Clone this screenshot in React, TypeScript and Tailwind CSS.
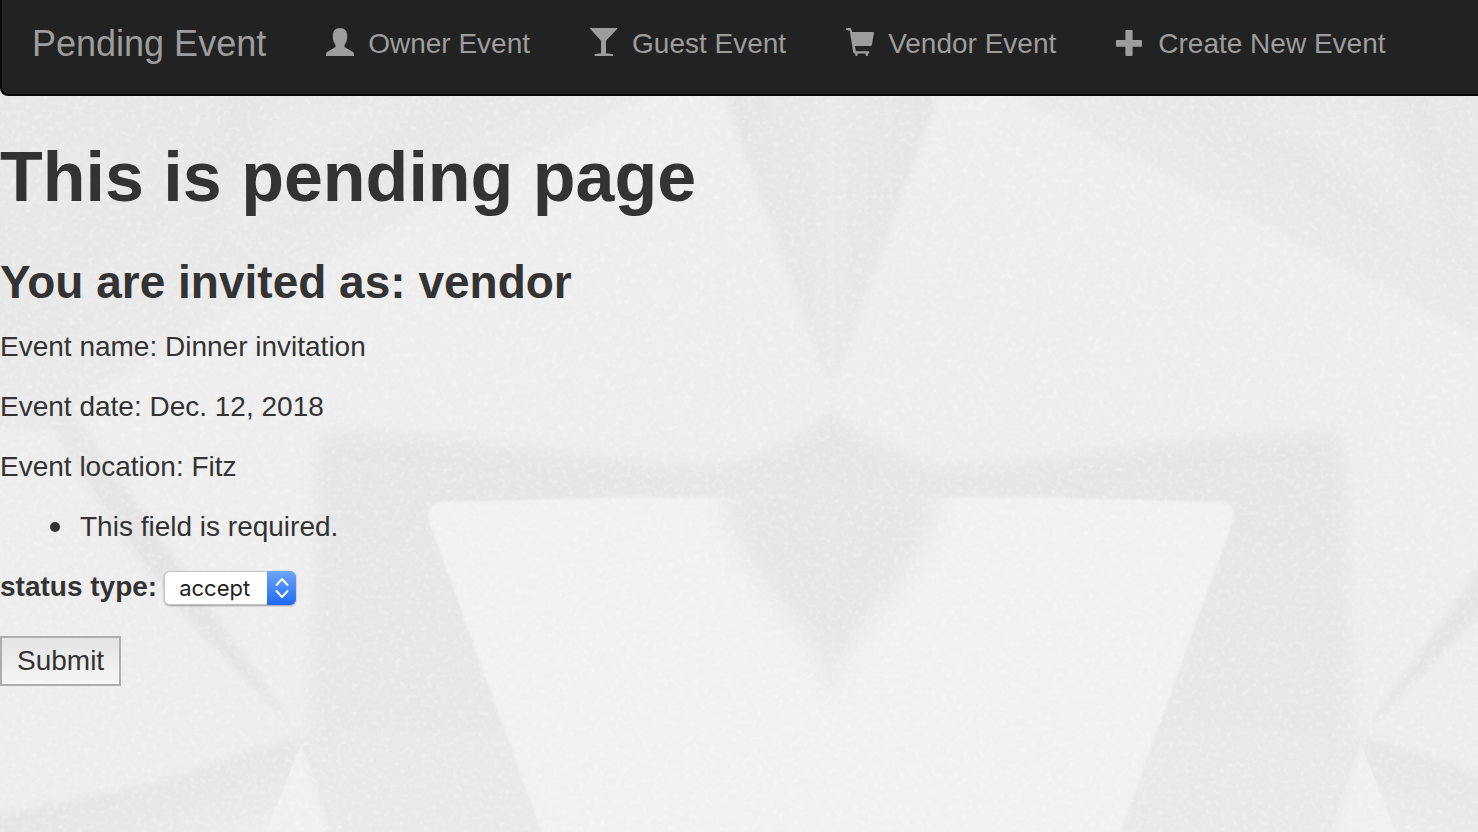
import React from 'react';

function UserIcon() {
  return (
    <svg viewBox="0 0 28 28" className="mb-1 size-7 fill-current" aria-hidden="true">
      <path d="M14 0c4.6 0 7.200 3 7.200 7.400 0 3-.4 5.200-1.200 7-.5 1.200-1.500 2-1.500 3v.8c0 .8.400 1.300 1.100 1.600l7 3.900c.9.5 1.400 1.100 1.400 2.100V28H0v-2.200c0-1 .5-1.600 1.400-2.100l7-3.900c.7-.3 1.100-.8 1.100-1.600v-.8c0-1-1-1.800-1.500-3-.8-1.800-1.200-4-1.200-7C6.800 3 9.400 0 14 0z" />
    </svg>
  );
}

function GlassIcon() {
  return (
    <svg viewBox="0 0 28 28" className="mb-1 size-7 fill-current" aria-hidden="true">
      <path d="M.6 0h26.300c.6 0 .6.500.2 1L16 12.800V25.300l6.200.8c.5.100.8.300.8.700v1.200H4.600v-1.200c0-.4.300-.6.800-.7l5.600-.8V12.800L.3 1C-.1.500 0 0 .6 0z" />
    </svg>
  );
}

function CartIcon() {
  return (
    <svg viewBox="0 0 28 28" className="mb-1 size-7 fill-current" aria-hidden="true">
      <path d="M.9 0h3.200c.6 0 1 .3 1.200.9L6.100 4h20.700c.8 0 1.200.5 1.100 1.200l-2 11.600c-.2.900-.7 1.300-1.500 1.300H9l.7 4.400c.1.500.4.800.9.800h11.800c1.200 0 1.200 2.200 0 2.200H22v1.300c0 1.600-2.400 1.600-2.400 0v-1.300h-8v1.300c0 1.600-2.400 1.600-2.400 0v-1.300h-.4c-.9 0-1.400-.4-1.600-1.300L3.700 2.700.6 2C-.4 1.500-.1 0 .9 0z" />
    </svg>
  );
}

function PlusIcon() {
  return (
    <svg viewBox="0 0 28 28" className="mb-1 size-7 fill-current" aria-hidden="true">
      <path d="M10.400 2h5.200c.6 0 1 .4 1 1v9h8.400c.6 0 1 .4 1 1v4.700c0 .6-.4 1-1 1h-8.400V27c0 .6-.4 1-1 1h-5.200c-.6 0-1-.4-1-1v-8.300H1c-.6 0-1-.4-1-1V13c0-.6.4-1 1-1h8.400V3c0-.6.400-1 1-1z" />
    </svg>
  );
}

const links = [
  { label: 'Owner Event', Icon: UserIcon },
  { label: 'Guest Event', Icon: GlassIcon },
  { label: 'Vendor Event', Icon: CartIcon },
  { label: 'Create New Event', Icon: PlusIcon },
];

/* Left half of the folded-paper pattern; the right half mirrors it. */
function Folds() {
  return (
    <g>
      <path d="M-200 0H770L640 100L190 335L60 420L-200 560Z" fill="url(#corner)" filter="url(#soft2)" />
      <path d="M0 96H230L190 260L90 310L0 300Z" fill="#eeeeee" opacity=".35" filter="url(#soft8)" />
      <path d="M270 96L215 250L330 160L440 96Z" fill="#efefef" opacity=".5" filter="url(#soft8)" />
      <path d="M20 380L65 400L100 450L190 580L302 738L190 622L110 530Z" fill="url(#crease)" filter="url(#soft2)" />
      <path d="M-40 420L55 435L190 625L298 738L-40 845Z" fill="#ededed" opacity=".6" />
      <path d="M298 737L150 785L-80 830V960H250L300 770Z" fill="url(#lower)" filter="url(#soft2)" />
      <path d="M845 405C800 440 760 462 710 468C600 464 480 435 325 432C310 455 320 520 312 620L306 745L338 840H600V500H845Z" fill="url(#column)" filter="url(#soft4)" />
      <path d="M301 744L255 860H340L312 770Z" fill="#f0f0f0" />
      <path d="M302 740L312 765L340 860" fill="none" stroke="#e3e3e3" strokeWidth="4" filter="url(#soft2)" />
      <path d="M690 0L831 395V0Z" fill="url(#notch)" filter="url(#soft2)" />
      <path d="M840 498L600 498L442 502Q424 504 429 521L548 850H840Z" fill="#f1f1f1" filter="url(#soft1)" />
      <path d="M850 470L720 490C735 555 765 585 790 615C810 640 825 655 830 690L850 690Z" fill="#e6e6e6" filter="url(#soft8)" />
    </g>
  );
}

function PaperBackground() {
  return (
    <svg
      className="absolute inset-0 -z-10 size-full"
      viewBox="0 0 1478 832"
      preserveAspectRatio="xMinYMin slice"
      aria-hidden="true"
    >
      <defs>
        <linearGradient id="corner" gradientUnits="userSpaceOnUse" x1="300" y1="130" x2="355" y2="245">
          <stop offset="0" stopColor="#e5e5e5" />
          <stop offset="1" stopColor="#eaeaea" />
        </linearGradient>
        <linearGradient id="crease" gradientUnits="userSpaceOnUse" x1="40" y1="390" x2="130" y2="520">
          <stop offset="0" stopColor="#e9e9e9" />
          <stop offset="1" stopColor="#e4e4e4" />
        </linearGradient>
        <linearGradient id="lower" gradientUnits="userSpaceOnUse" x1="150" y1="780" x2="175" y2="860">
          <stop offset="0" stopColor="#e5e5e5" />
          <stop offset="1" stopColor="#ececec" />
        </linearGradient>
        <linearGradient id="column" gradientUnits="userSpaceOnUse" x1="0" y1="440" x2="0" y2="800">
          <stop offset="0" stopColor="#e5e5e5" />
          <stop offset="1" stopColor="#e9e9e9" />
        </linearGradient>
        <linearGradient id="notch" gradientUnits="userSpaceOnUse" x1="740" y1="0" x2="831" y2="0">
          <stop offset="0" stopColor="#e5e5e5" />
          <stop offset="1" stopColor="#e9e9e9" />
        </linearGradient>
        <filter id="soft1"><feGaussianBlur stdDeviation="1" /></filter>
        <filter id="soft2"><feGaussianBlur stdDeviation="4" /></filter>
        <filter id="soft4"><feGaussianBlur stdDeviation="10" /></filter>
        <filter id="soft8"><feGaussianBlur stdDeviation="14" /></filter>
        <filter id="speckle" x="0" y="0" width="100%" height="100%">
          <feTurbulence type="fractalNoise" baseFrequency="0.19" numOctaves="2" seed="7" />
          <feColorMatrix values="0 0 0 0 1  0 0 0 0 1  0 0 0 0 1  3 0 0 0 -1.500" />
        </filter>
        <clipPath id="half"><rect x="-400" y="0" width="1232" height="832" /></clipPath>
      </defs>
      <rect width="1478" height="832" fill="#eeeeee" />
      <g clipPath="url(#half)"><Folds /></g>
      <g transform="translate(1662 0) scale(-1 1)" clipPath="url(#half)"><Folds /></g>
      <rect width="1478" height="832" filter="url(#speckle)" opacity=".28" />
    </svg>
  );
}

export default function App() {
  return (
    <div className="relative isolate min-h-screen overflow-hidden font-['Helvetica_Neue','Liberation_Sans',Arial,sans-serif] text-[28px] leading-10 text-[#333333]">
      <PaperBackground />
      <nav className="mb-[41px] flex h-24 items-start rounded-bl-lg border-b-2 border-l-2 border-[#080808] bg-[#222222] text-[#9d9d9d]">
        <a href="#pending" className="px-[30px] pt-6 text-4xl leading-10 whitespace-nowrap">Pending Event</a>
        <ul className="flex">
          {links.map(({ label, Icon }) => (
            <li key={label}>
              <a href="#event" className="flex items-center gap-3.5 px-[30px] pt-6 whitespace-nowrap">
                <Icon />
                {label}
              </a>
            </li>
          ))}
        </ul>
      </nav>
      <main>
        <h1 className="mb-10 text-[70px] leading-[80px] font-bold">This is pending page</h1>
        <h2 className="mb-5 text-[46px] leading-[50px] font-bold">You are invited as: vendor</h2>
        <p className="mb-5">Event name: Dinner invitation</p>
        <p className="mb-5">Event date: Dec. 12, 2018</p>
        <p className="mb-5">Event location: Fitz</p>
        <form onSubmit={(e) => e.preventDefault()}>
          <ul className="mb-5 pl-[50px]">
            <li className="flex items-center gap-5 before:size-2.5 before:rounded-full before:bg-[#333333]">
              This field is required.
            </li>
          </ul>
          <div className="mb-[29px] flex items-center gap-[7px]">
            <label htmlFor="status" className="font-bold">status type:</label>
            <div className="relative mt-0.5 flex rounded-md shadow-[0_1px_2px_rgba(0,0,0,0.35)]">
              <select
                id="status"
                defaultValue="accept"
                className="h-[34px] w-[132px] appearance-none rounded-md border border-[#c4c4c4] bg-white pl-3.5 font-[Inter,sans-serif] text-[22px] leading-8 text-[#222222]"
              >
                <option value="accept">accept</option>
                <option value="decline">decline</option>
              </select>
              <span className="pointer-events-none absolute inset-y-0 right-0 flex w-[29px] items-center justify-center rounded-r-md bg-linear-to-b from-[#6ea5f5] to-[#1c68f8]">
                <svg viewBox="0 0 14 22" className="h-[22px] w-3.5 fill-none stroke-white stroke-2" strokeLinecap="round" strokeLinejoin="round" aria-hidden="true">
                  <path d="M1.500 8L7 2l5.500 6M1.500 14L7 20l5.500-6" />
                </svg>
              </span>
            </div>
          </div>
          <button
            type="submit"
            className="flex h-[50px] items-center border-2 border-[#adadad] bg-linear-to-b from-[#e4e4e4] to-[#f6f6f6] px-[15px]"
          >
            Submit
          </button>
        </form>
      </main>
    </div>
  );
}
